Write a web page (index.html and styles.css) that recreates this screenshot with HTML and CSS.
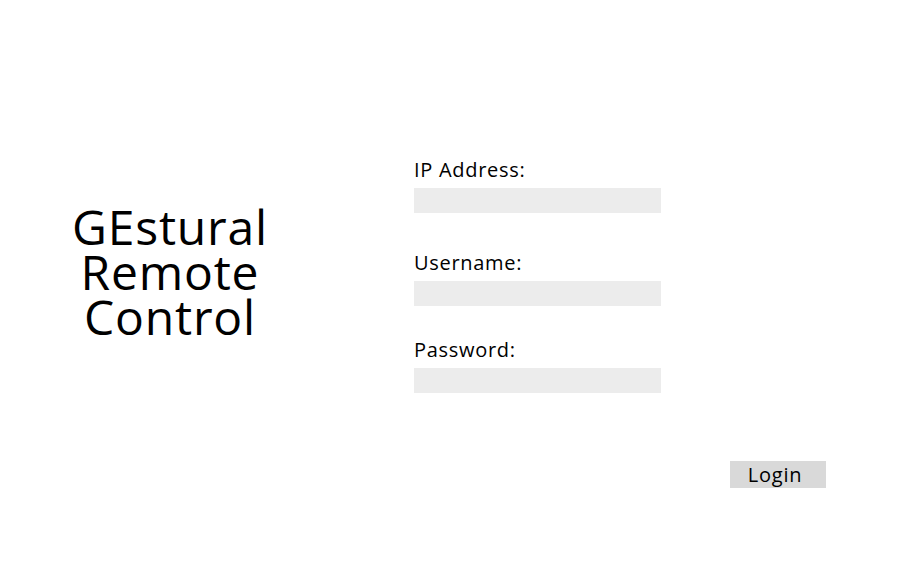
FILE: index.html
```html
<!DOCTYPE html>
<html lang="en">
<head>
<meta charset="utf-8">
<title>GEstural Remote Control</title>
<link rel="stylesheet" href="styles.css">
</head>
<body>
<main class="page">
  <h1 class="brand">GEstural<br>Remote<br>Control</h1>
  <form class="login">
    <label class="field">
      <span class="label">IP Address:</span>
      <input class="input" type="text">
    </label>
    <label class="field">
      <span class="label">Username:</span>
      <input class="input" type="text">
    </label>
    <label class="field">
      <span class="label">Password:</span>
      <input class="input" type="password">
    </label>
    <div class="actions">
      <button class="button" type="button">Login</button>
    </div>
  </form>
</main>
</body>
</html>
```
FILE: styles.css
```css
html, body {
  margin: 0;
  padding: 0;
  background: #ffffff;
  color: #000000;
  font-family: "Open Sans", "Lato", sans-serif;
}
.page {
  display: flex;
  align-items: flex-start;
  padding-top: 158px;
}
.brand {
  width: 340px;
  margin: 46px 0 0 0;
  text-align: center;
  font-weight: 400;
  font-size: 48px;
  line-height: 45px;
  letter-spacing: 0.8px;
}
.login {
  margin-left: 74px;
  width: 412px;
  display: flex;
  flex-direction: column;
}
.field {
  display: flex;
  flex-direction: column;
  margin-bottom: 38px;
}
.field:nth-child(2) {
  margin-bottom: 32px;
}
.field:nth-child(3) {
  margin-bottom: 0;
}
.label {
  font-size: 20px;
  line-height: 24px;
  padding-bottom: 6px;
  letter-spacing: 0.7px;
}
.input {
  width: 247px;
  height: 25px;
  box-sizing: border-box;
  border: none;
  margin: 0;
  padding: 0;
  background: #ececec;
}
.actions {
  display: flex;
  justify-content: flex-end;
  margin-top: 68px;
}
.button {
  width: 96px;
  height: 27px;
  border: none;
  margin: 0;
  padding: 0 6px 0 0;
  background: #d9d9d9;
  font-family: inherit;
  font-size: 20px;
  line-height: 27px;
  letter-spacing: 0.8px;
  color: #000;
}
```
